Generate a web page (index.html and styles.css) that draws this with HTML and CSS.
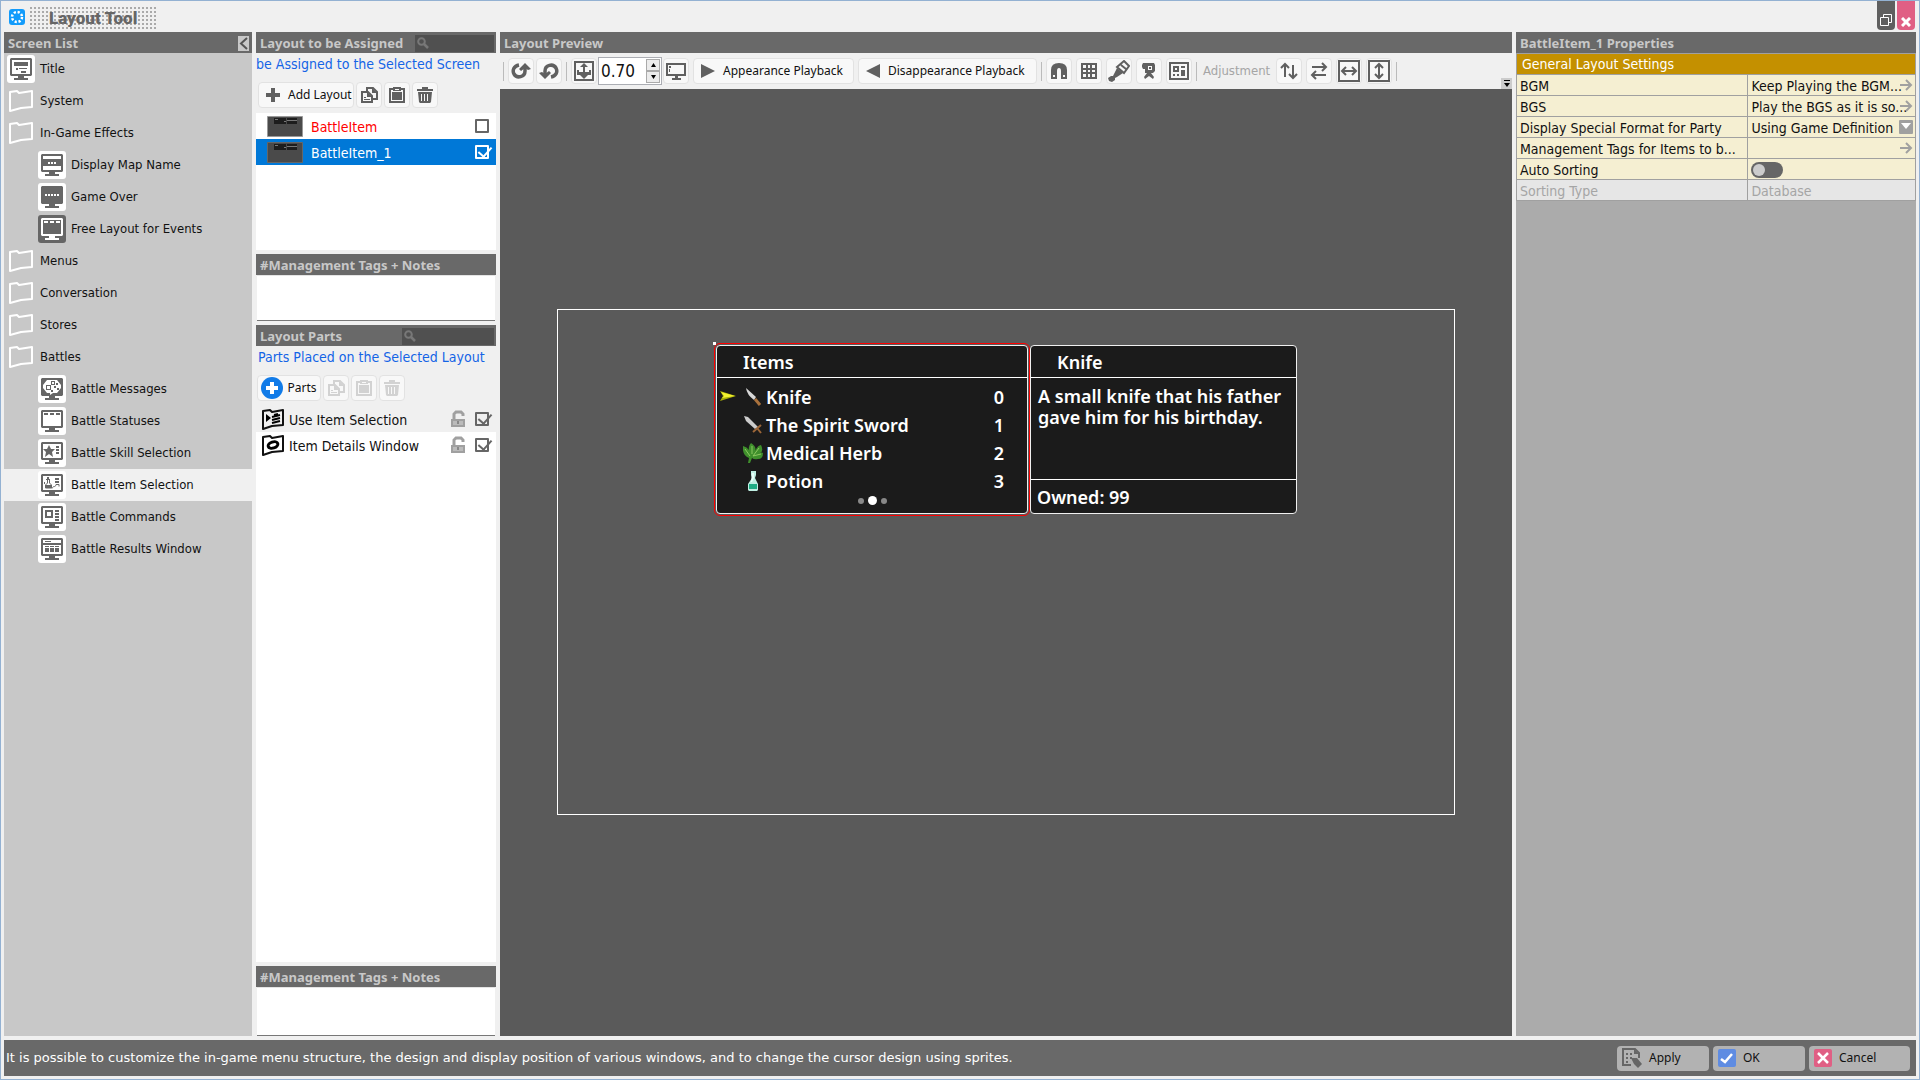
FILE: index.html
```html
<!DOCTYPE html>
<html lang="en">
<head>
<meta charset="utf-8">
<title>Layout Tool</title>
<link rel="stylesheet" href="styles.css">
</head>
<body>
<svg class="sprite" aria-hidden="true">
  <symbol id="monitor" viewBox="0 0 28 28"><path fill="currentColor" fill-rule="evenodd" d="M4 3h20l1 1v16l-1 1H4l-1-1V4zM5 5v14h18V5z"/><path fill="currentColor" d="M11 21h6v2h4v2H7v-2h4z"/></symbol>
  <symbol id="monitor-full" viewBox="0 0 28 28"><path fill="currentColor" d="M4 3h20l1 1v16l-1 1H4l-1-1V4zM11 21h6v2h4v2H7v-2h4z"/></symbol>
  <symbol id="folder" viewBox="0 0 28 28"><path fill="none" stroke="currentColor" stroke-width="2" stroke-linejoin="round" d="M3 5l7-1 2 2 13-2v16l-11 1-11 3z"/></symbol>
  <symbol id="part-folder" viewBox="0 0 24 22"><path fill="none" stroke="currentColor" stroke-width="2" stroke-linejoin="round" d="M2 3l7-1 2 2 11-2v15l-11 1-9 3z"/></symbol>
  <symbol id="copy" viewBox="0 0 18 18"><path fill="none" stroke="currentColor" stroke-width="2" d="M7 5V2h6l4 4v7h-4"/><path fill="currentColor" d="M12 2v5h5z"/><path fill="none" stroke="currentColor" stroke-width="2" d="M2 6h6l4 4v6H2z"/><path fill="currentColor" d="M7 6v5h5zM4 11h2v1H4zM4 13h6v1H4z"/></symbol>
  <symbol id="paste" viewBox="0 0 18 18"><path fill="none" stroke="currentColor" stroke-width="2" d="M6 3H2v13h14V3h-4"/><path fill="currentColor" d="M5 1h8v4H5zM4 6h10v8H4z"/><path fill="#f8f8f8" d="M7 3h4v1H7z"/></symbol>
  <symbol id="trash" viewBox="0 0 18 18"><path fill="currentColor" fill-rule="evenodd" d="M6 1h6v2h5v2H1V3h5zM2 6h14l-1 10-1 1H4l-1-1zM5 8v7h1V8zM8 8v7h1V8zM11 8v7h1V8z"/></symbol>
  <symbol id="lens" viewBox="0 0 12 12"><circle cx="4.500" cy="4.500" r="3.300" fill="none" stroke="currentColor" stroke-width="2"/><path stroke="currentColor" stroke-width="2.500" d="M7 7l4 4"/></symbol>
  <symbol id="lock" viewBox="0 0 14 18"><path fill="none" stroke="#a0a0a0" stroke-width="3" d="M3 9V4l2-2h5l2 2v2"/><path fill="#a0a0a0" d="M0 9h14v8H0z"/><path fill="#bbb" d="M2 11h10v4H2z"/><path fill="#888" d="M6 11h2v3H6z"/></symbol>
  <symbol id="arrow" viewBox="0 0 14 14"><path fill="none" stroke="currentColor" stroke-width="2" d="M1 7h11M7 2l5 5-5 5"/></symbol>
  <symbol id="rotate" viewBox="0 0 20 18"><path fill="none" stroke="currentColor" stroke-width="3.500" d="M8 3C3 4 1 8 3 12c3 5 11 3 11-3V5"/><path fill="currentColor" d="M8 7l6-6 6 6-3 1-3-2-4 3z"/></symbol>
</svg>

<div class="window">
  <header class="titlebar">
    <svg class="app-icon" viewBox="0 0 16 16"><rect width="16" height="16" rx="3" fill="#129bfb"/><circle cx="8" cy="8" r="5" fill="none" stroke="#fff" stroke-width="2.500" stroke-dasharray="2.200 1.727"/></svg>
    <h1 class="app-title">Layout Tool</h1>
    <div class="window-buttons">
      <button class="win-btn" aria-label="Restore"><svg width="14" height="14" viewBox="0 0 14 14"><path fill="none" stroke="#fff" d="M4.500 4V1.500h8v8H10M1.500 4.500h8v8h-8z"/></svg></button>
      <button class="win-btn close" aria-label="Close"><svg width="10" height="10" viewBox="0 0 10 10"><path stroke="#fff" stroke-width="3" d="M1 1l8 8M9 1L1 9"/></svg></button>
    </div>
  </header>

  <main class="panels">
    <section class="panel screens">
      <h2 class="bar">Screen List <button class="collapse" aria-label="Collapse"><svg width="11" height="15" viewBox="0 0 11 15"><path fill="none" stroke="#555" stroke-width="2" d="M9 2L3 7.500 9 13"/></svg></button></h2>
      <nav class="tree">
        <button class="node"><svg class="tile"><use href="#monitor"/><path fill="currentColor" d="M7 7h14v4H7zM9 13h2v2H9zM12 13h8v1h-8zM14 16h5v2h-5z"/></svg>Title</button>
        <button class="node"><svg class="folder"><use href="#folder"/></svg>System</button>
        <button class="node"><svg class="folder"><use href="#folder"/></svg>In-Game Effects</button>
        <button class="node child"><svg class="tile"><use href="#monitor"/><path fill="currentColor" d="M5 8h18v7H5z"/><path fill="#fff" d="M10 11h2v2h-2zM13 11h2v2h-2zM16 11h2v2h-2z"/></svg>Display Map Name</button>
        <button class="node child"><svg class="tile"><use href="#monitor-full"/><path fill="#fff" d="M7 11h2v2H7zM10 11h2v2h-2zM13 11h2v2h-2zM16 11h2v2h-2zM19 11h2v2h-2z"/></svg>Game Over</button>
        <button class="node child"><svg class="tile inverse"><use href="#monitor"/><path fill="#fff" d="M6 6h4v2H6zM12 6h4v2h-4zM18 6h4v2h-4z"/></svg>Free Layout for Events</button>
        <button class="node"><svg class="folder"><use href="#folder"/></svg>Menus</button>
        <button class="node"><svg class="folder"><use href="#folder"/></svg>Conversation</button>
        <button class="node"><svg class="folder"><use href="#folder"/></svg>Stores</button>
        <button class="node"><svg class="folder"><use href="#folder"/></svg>Battles</button>
        <button class="node child"><svg class="tile"><use href="#monitor-full"/><path fill="#fff" d="M9 5h10l4 5v3l-4 5h-4l-3 2v-2H9l-4-5v-3z"/><path fill="currentColor" fill-rule="evenodd" d="M8 10h5v5H8zM9 11v3h3v-3zM13 6h4v4h-4zM14 7v2h2V7zM16 11h2v2h-2zM18 8h2v2h-2zM13 15h2v2h-2zM19 13h2v2h-2z"/></svg>Battle Messages</button>
        <button class="node child"><svg class="tile"><use href="#monitor"/><path fill="currentColor" d="M6 6h4v2H6zM12 6h4v2h-4zM18 6h4v2h-4z"/></svg>Battle Statuses</button>
        <button class="node child"><svg class="tile"><use href="#monitor"/><path fill="currentColor" d="M11 6l2 4h4l-3 3 1 5-4-3-4 3 1-5-3-3h4zM18 7h3v2h-3zM18 10h3v2h-3zM18 13h3v2h-3z"/></svg>Battle Skill Selection</button>
        <button class="node child selected"><svg class="tile"><use href="#monitor"/><path fill="currentColor" d="M9 6h2v2H9zM8 8h4v1H8zM17 7h4v2h-4zM17 10h4v2h-4zM7 14h6v3H7z"/><path fill="none" stroke="currentColor" d="M9.500 9v3l-2 2v3h6v-3l-2-2V9M6.500 11v2M14 17.500c2-4 3 0 4-4h3v2"/></svg>Battle Item Selection</button>
        <button class="node child"><svg class="tile"><use href="#monitor"/><path fill="none" stroke="currentColor" stroke-width="2" d="M8 8h6v6H8z"/><path fill="currentColor" d="M17 7h4v2h-4zM17 10h4v2h-4zM17 13h4v2h-4zM17 16h4v2h-4z"/></svg>Battle Commands</button>
        <button class="node child"><svg class="tile"><use href="#monitor"/><path fill="currentColor" d="M7 6h6v1H7zM5 8h18v2H5zM7 11h4v1H7zM12 11h4v1h-4zM17 11h4v1h-4zM7 13h4v4H7zM12 13h4v4h-4zM17 13h4v4h-4z"/></svg>Battle Results Window</button>
      </nav>
    </section>

    <div class="middle">
      <section class="block">
        <h2 class="bar">Layout to be Assigned <label class="search short"><svg width="12" height="12"><use href="#lens"/></svg><input type="text" aria-label="Search layouts"></label></h2>
        <p class="caption rolling">be Assigned to the Selected Screen</p>
        <div class="tools">
          <button class="btn add"><svg width="14" height="14" viewBox="0 0 14 14"><path fill="currentColor" d="M5 0h4v5h5v4H9v5H5V9H0V5h5z"/></svg><span>Add Layout</span></button>
          <button class="btn" aria-label="Copy"><svg width="18" height="18"><use href="#copy"/></svg></button>
          <button class="btn" aria-label="Paste"><svg width="18" height="18"><use href="#paste"/></svg></button>
          <button class="btn" aria-label="Delete"><svg width="18" height="18"><use href="#trash"/></svg></button>
        </div>
        <ul class="list layouts">
          <li class="row unused"><svg class="thumb" viewBox="0 0 36 21"><path fill="#4a4a4a" stroke="#999" d="M.5.5h35v20H.5z"/><path fill="#1d1d1d" d="M7 2h12v6H7zM20 2h10v6H20z"/><path stroke="#777" d="M20 4.500h10M8 3.500h3M17 5.500h2"/></svg><label for="l1">BattleItem</label><input id="l1" class="check" type="checkbox"></li>
          <li class="row active"><svg class="thumb" viewBox="0 0 36 21"><path fill="#4a4a4a" stroke="#666" d="M.5.5h35v20H.5z"/><path fill="#1d1d1d" d="M7 2h12v6H7zM20 2h10v6H20z"/><path stroke="#777" d="M20 4.500h10M8 3.500h3M17 5.500h2"/></svg><label for="l2">BattleItem_1</label><input id="l2" class="check" type="checkbox" checked></li>
        </ul>
      </section>
      <section class="block">
        <h2 class="bar">#Management Tags + Notes</h2>
        <textarea class="notes" aria-label="Layout tags and notes"></textarea>
      </section>
      <section class="block grow">
        <h2 class="bar">Layout Parts <label class="search"><svg width="12" height="12"><use href="#lens"/></svg><input type="text" aria-label="Search parts"></label></h2>
        <p class="caption">Parts Placed on the Selected Layout</p>
        <div class="tools parts">
          <button class="btn part"><svg width="22" height="22" viewBox="0 0 22 22"><circle cx="11" cy="11" r="11" fill="#117be8"/><path fill="#fff" d="M9 5h4v4h4v4h-4v4H9v-4H5V9h4z"/></svg><span>Parts</span></button>
          <button class="btn" disabled aria-label="Copy part"><svg width="18" height="18"><use href="#copy"/></svg></button>
          <button class="btn" disabled aria-label="Paste part"><svg width="18" height="18"><use href="#paste"/></svg></button>
          <button class="btn" disabled aria-label="Delete part"><svg width="18" height="18"><use href="#trash"/></svg></button>
        </div>
        <ul class="list">
          <li class="row part-row current"><svg width="24" height="22" viewBox="0 0 24 22"><use href="#part-folder"/><path d="M5 6l5 4-5 4z"/><path stroke="#000" stroke-width="2" d="M11 9l8-2M11 12l8-2M11 15l8-2M13 7l4-1"/></svg><label for="p1">Use Item Selection</label><svg width="14" height="18"><use href="#lock"/></svg><input id="p1" class="check" type="checkbox" checked></li>
          <li class="row part-row"><svg width="24" height="22" viewBox="0 0 24 22"><use href="#part-folder"/><ellipse cx="12" cy="11" rx="5" ry="3" fill="none" stroke="#000" stroke-width="3" transform="rotate(-18 12 11)"/></svg><label for="p2">Item Details Window</label><svg width="14" height="18"><use href="#lock"/></svg><input id="p2" class="check" type="checkbox" checked></li>
        </ul>
      </section>
      <section class="block">
        <h2 class="bar">#Management Tags + Notes</h2>
        <textarea class="notes" aria-label="Part tags and notes"></textarea>
      </section>
    </div>

    <section class="panel preview">
      <h2 class="bar">Layout Preview</h2>
      <div class="toolbar">
        <i class="sep"></i>
        <div class="group">
          <button class="btn" aria-label="Undo"><svg width="20" height="18"><use href="#rotate"/></svg></button>
          <button class="btn" aria-label="Redo"><svg class="turned" width="20" height="18"><use href="#rotate"/></svg></button>
        </div>
        <i class="sep"></i>
        <div class="group tight">
          <button class="btn" aria-label="Fit"><svg width="20" height="20" viewBox="0 0 20 20"><path fill="none" stroke="currentColor" stroke-width="2" d="M1 1h18v18H1z"/><path fill="currentColor" d="M10 2l4 4H6zM9 6h2v5H9zM3 9h2v2h10V9h2v5h-3l-4 4-4-4H3z"/></svg></button>
          <div class="spin"><input type="text" value="0.70" aria-label="Zoom"><button aria-label="Increase"><svg width="5" height="4" viewBox="0 0 5 4"><path d="M2.500 0L5 4H0z"/></svg></button><button aria-label="Decrease"><svg width="5" height="4" viewBox="0 0 5 4"><path d="M2.500 4L5 0H0z"/></svg></button></div>
          <button class="btn" aria-label="Actual size"><svg width="20" height="18" viewBox="0 0 20 18"><path fill="none" stroke="currentColor" stroke-width="2" d="M1 2h18v11H1z"/><path fill="currentColor" d="M9 13h3v3h3v2H6v-2h3zM3 4h2v2H3zM3 7h1v3H3z"/></svg></button>
        </div>
        <button class="btn play"><svg width="14" height="14" viewBox="0 0 14 14"><path fill="currentColor" d="M0 0l14 7-14 7z"/></svg><span>Appearance Playback</span></button>
        <button class="btn play back"><svg width="14" height="14" viewBox="0 0 14 14"><path fill="currentColor" d="M14 0L0 7l14 7z"/></svg><span>Disappearance Playback</span></button>
        <i class="sep"></i>
        <button class="btn" aria-label="Snap"><svg width="18" height="18" viewBox="0 0 18 18"><path fill="currentColor" fill-rule="evenodd" d="M1 17V8q0-7 8-7t8 7v9h-6V9q0-3-2-3T7 9v8zM3 13v2h2v-2zM13 13v2h2v-2z"/></svg></button>
        <button class="btn" aria-label="Grid"><svg width="16" height="16" viewBox="0 0 16 16"><path fill="none" stroke="currentColor" stroke-width="2" d="M1 1h14v14H1zM1 6h14M1 10h14M6 1v14M10 1v14"/></svg></button>
        <button class="btn" aria-label="Brush"><svg width="22" height="22" viewBox="0 0 22 22"><path fill="none" stroke="currentColor" stroke-width="2" d="M16 1l5 5-5 7-7-6zM13 5l5 4"/><path fill="currentColor" d="M9 8l6 5-6 4-2 1v2l-3 2-3-1-1-3 3-2h2l1-2z"/></svg></button>
        <button class="btn" aria-label="Camera"><svg width="18" height="18" viewBox="0 0 18 18"><path fill="currentColor" fill-rule="evenodd" d="M3 1h11l1 2v6l-2 2h-2l3 4-1 2-4-3-4 3-1-2 3-4H5V7H3L2 5V3zM8 4v4h4V4z"/><path fill="currentColor" d="M9 5h2v2H9z"/></svg></button>
        <button class="btn" aria-label="Safe area"><svg width="20" height="18" viewBox="0 0 20 18"><path fill="none" stroke="currentColor" stroke-width="2" d="M1 1h18v16H1zM5 5h4v4H5z"/><path fill="currentColor" d="M12 4h4v2h-4zM12 8h4v6h-4zM4 12h2v2H4zM8 12h2v2H8z"/></svg></button>
        <i class="sep"></i>
        <span class="adjust">Adjustment</span>
        <button class="btn" aria-label="Swap vertically"><svg width="18" height="18" viewBox="0 0 18 18"><path fill="none" stroke="currentColor" stroke-width="2" d="M5 15V3M1 6l4-4 4 4M13 3v12M9 12l4 4 4-4"/></svg></button>
        <button class="btn" aria-label="Swap horizontally"><svg width="18" height="18" viewBox="0 0 18 18"><path fill="none" stroke="currentColor" stroke-width="2" d="M2 5h13M12 1l4 4-4 4M16 13H3M6 9l-4 4 4 4"/></svg></button>
        <button class="btn" aria-label="Fit width"><svg width="22" height="22" viewBox="0 0 22 22"><path fill="none" stroke="currentColor" stroke-width="2" d="M1 1h20v20H1zM4 11h14M8 7l-4 4 4 4M14 7l4 4-4 4"/></svg></button>
        <button class="btn" aria-label="Fit height"><svg width="22" height="22" viewBox="0 0 22 22"><path fill="none" stroke="currentColor" stroke-width="2" d="M1 1h20v20H1zM11 4v14M7 8l4-4 4 4M7 14l4 4 4-4"/></svg></button>
        <i class="sep"></i>
        <button class="overflow" aria-label="More"><svg width="6" height="7" viewBox="0 0 6 7"><path d="M0 0h6v1H0zM0 3h6L3 7z"/></svg></button>
      </div>
      <div class="stage">
        <div class="screen">
          <div class="game-window items">
            <h3>Items</h3>
            <svg class="pointer" viewBox="0 0 16 10"><path fill="#a8ae08" d="M0 0l16 5-16 5 3-5z"/><path fill="#f2f230" d="M1 1l14 4-13 2 2-2z"/></svg>
            <ul>
              <li><svg viewBox="0 0 20 20"><path fill="#d8d8d8" d="M3 1l10 9-2 3Q4 8 3 1z"/><path stroke="#a9713c" stroke-width="3" d="M12 12l5 6"/></svg><span>Knife</span><b>0</b></li>
              <li><svg viewBox="0 0 20 20"><path fill="#ccc" d="M1 1l4 1 10 10-3 2L3 6z"/><path stroke="#9c6638" stroke-width="2" d="M18 10l-8 7M14 13l4 5"/></svg><span>The Spirit Sword</span><b>1</b></li>
              <li><svg viewBox="0 0 20 20"><path fill="#3f8f2c" d="M8 0q6 4 4 8 3-6 6-6 3 6-1 8 2-1 3 0 0 6-5 6-4 1-6-1l-2 5H5l1-5Q-1 12 0 3q4 1 6 4Q5 3 8 0z"/><path fill="none" stroke="#8cc860" d="M9 3v8M2 6l5 7M16 5l-6 8 8-2"/></svg><span>Medical Herb</span><b>2</b></li>
              <li><svg viewBox="0 0 20 20"><path fill="#bfeee2" d="M8 0h5v4l-1 3 3 6v6l-1 1H6l-1-1v-6l4-6-1-3z"/><path fill="#1eac84" d="M6 13h8v5H6z"/><path fill="#e8fffa" d="M9 2h2v5l-2 4H8z"/></svg><span>Potion</span><b>3</b></li>
            </ul>
            <div class="dots"><i></i><i class="on"></i><i></i></div>
          </div>
          <div class="game-window details">
            <h3>Knife</h3>
            <p>A small knife that his father<br>gave him for his birthday.</p>
            <footer>Owned: 99</footer>
          </div>
        </div>
      </div>
    </section>

    <section class="panel props">
      <h2 class="bar">BattleItem_1 Properties</h2>
      <table class="grid">
        <colgroup><col class="name-col"><col></colgroup>
        <thead><tr><th colspan="2">General Layout Settings</th></tr></thead>
        <tbody>
          <tr><td>BGM</td><td><button class="value">Keep Playing the BGM...<svg width="14" height="14"><use href="#arrow"/></svg></button></td></tr>
          <tr><td>BGS</td><td><button class="value">Play the BGS as it is so...<svg width="14" height="14"><use href="#arrow"/></svg></button></td></tr>
          <tr><td><label for="fmt">Display Special Format for Party</label></td><td><div class="value"><select id="fmt"><option>Using Game Definition</option></select><svg width="14" height="14" viewBox="0 0 14 14"><rect width="14" height="14" rx="1" fill="#a0a0a0"/><path fill="#fff" d="M2 3h10L7 9z"/></svg></div></td></tr>
          <tr><td>Management Tags for Items to b...</td><td><button class="value" aria-label="Edit tags"><svg width="14" height="14"><use href="#arrow"/></svg></button></td></tr>
          <tr><td><label for="sort">Auto Sorting</label></td><td><input id="sort" class="switch" type="checkbox"></td></tr>
          <tr class="off"><td>Sorting Type</td><td>Database</td></tr>
        </tbody>
      </table>
    </section>
  </main>

  <footer class="status">
    <p>It is possible to customize the in-game menu structure, the design and display position of various windows, and to change the cursor design using sprites.</p>
    <button class="action"><svg width="20" height="20" viewBox="0 0 20 20"><path fill="none" stroke="#666" stroke-width="2" d="M9 17H1V1h12l4 4v5"/><path fill="#666" d="M12 1v5h5zM4 5h2v2H4zM8 5h2v2H8zM4 9h2v2H4zM8 9h2v2H8zM4 13h2v2H4zM9 10l6 0 5 6-4 4-4-4z"/></svg>Apply</button>
    <button class="action"><svg width="18" height="18" viewBox="0 0 18 18"><rect width="18" height="18" rx="2" fill="#5f8ce2"/><path fill="none" stroke="#fff" stroke-width="2.500" d="M3 10l4 3 7-8"/></svg>OK</button>
    <button class="action wide"><svg width="18" height="18" viewBox="0 0 18 18"><rect width="18" height="18" rx="2" fill="#e05f84"/><path stroke="#fff" stroke-width="2.500" d="M4 4l10 10M14 4L4 14"/></svg>Cancel</button>
  </footer>
</div>
</body>
</html>
```
FILE: styles.css
```css
* { box-sizing: border-box; }
body { margin: 0; background: #f0f0f0; color: #111; font: 14px/20px "DejaVu Sans Condensed", "DejaVu Sans", sans-serif; }
button, input, select, textarea { margin: 0; padding: 0; border: 0; font: inherit; color: inherit; background: none; }
h1, h2, h3, p, ul { margin: 0; padding: 0; }
ul { list-style: none; }
svg { flex: none; display: block; }
.sprite { position: absolute; width: 0; height: 0; }

.window { display: flex; flex-direction: column; min-height: 100vh; padding: 0 3px 3px; border: 1px solid #93b1d2; }

/* title bar */
.titlebar { display: flex; align-items: flex-start; height: 31px; padding-left: 5px; }
.app-icon { width: 16px; height: 16px; margin-top: 8px; }
.app-title { width: 126px; height: 22px; margin: 6px 0 0 5px; padding-left: 19px; color: #666; font: 900 17px/22px Roboto, sans-serif; white-space: nowrap; background: conic-gradient(from 270deg, #aaa 25%, transparent 0) 0 0 / 4px 4px; }
.window-buttons { display: flex; gap: 2px; margin-left: auto; padding-right: 1px; }
.win-btn { display: flex; align-items: flex-end; justify-content: center; width: 18px; height: 29px; padding-bottom: 3px; border-radius: 0 0 4px 4px; background: #5f5f5f; }
.win-btn.close { background: #e05f84; }

/* panels */
.panels { flex: 1; display: grid; grid-template-columns: 248px 240px minmax(0, 1fr) 400px; gap: 4px; }
.panel { display: flex; flex-direction: column; min-width: 0; }
.bar { display: flex; align-items: center; justify-content: space-between; flex: none; height: 21px; padding: 1px 2px 0 4px; background: #696969; color: #c8c8c8; font: 700 13px/20px "Noto Sans", sans-serif; white-space: nowrap; }
.collapse { display: flex; width: 11px; height: 15px; margin-right: 1px; background: #c8c8c8; }
.search { display: flex; align-items: center; width: 92px; height: 17px; padding-left: 2px; background: #505050; color: #787878; }
.search.short { width: 79px; }
.search input { width: 100%; min-width: 0; height: 17px; }

/* screen list */
.screens { background: #c8c8c8; }
.node { display: flex; align-items: center; gap: 5px; width: 100%; height: 32px; padding-left: 3px; font-size: 13px; text-align: left; }
.node.child { padding-left: 34px; }
.node.selected { background: #f0f0f0; }
.tile { width: 28px; height: 28px; border-radius: 3px; background: #fff; color: #666; }
.tile.inverse { background: #666; color: #fff; }
.folder { width: 28px; height: 28px; color: #fff; }

/* layouts and parts */
.middle { display: flex; flex-direction: column; gap: 4px; }
.block { display: flex; flex-direction: column; }
.grow { flex: 1; }
.caption { height: 24px; padding-left: 2px; color: #1464e6; line-height: 23px; white-space: nowrap; }
.rolling { display: flex; justify-content: flex-end; padding: 0 16px 0 0; overflow: hidden; }
.tools { display: flex; gap: 2px; height: 36px; padding: 5px 2px; }
.btn { display: flex; align-items: center; justify-content: center; flex: none; width: 26px; height: 26px; border: 1px solid #e2e2e2; border-radius: 4px; background: #f8f8f8; color: #606060; font: 12px/16px "Noto Sans", sans-serif; white-space: nowrap; }
.btn span { color: #111; }
.btn:disabled { color: #d2d2d2; }
.btn.add { width: 96px; gap: 8px; padding-left: 7px; justify-content: flex-start; }
.btn.part { width: 64px; gap: 4px; }
.parts { padding: 5px 1px; }
.list { flex: 1; background: #fff; }
.layouts { flex: none; height: 137px; }
.row { display: flex; align-items: center; height: 26px; padding: 0 7px 0 11px; gap: 8px; }
.row label { flex: 1; padding-top: 2px; white-space: nowrap; }
.part-row { padding-left: 5px; gap: 4px; }
.part-row .check { margin-left: 6px; }
.current { background: #f0f0f0; }
.unused label { color: #f00; }
.active { background: #0078d7; color: #fff; }
.thumb { width: 36px; height: 21px; }
.check { position: relative; flex: none; width: 14px; height: 14px; appearance: none; border: 2px solid #666; border-radius: 1px; }
.active .check { border-color: #fff; }
.check:checked::after { content: ""; position: absolute; left: 4px; top: -3px; width: 6px; height: 11px; border: solid #666; border-width: 0 2px 2px 0; transform: rotate(42deg); }
.active .check:checked::after { border-color: #fff; }
.notes { height: 46px; margin: 0 1px; border: solid #e4e4e4; border-width: 1px 0 1px; border-bottom-color: #777; background: #fff; resize: none; display: block; }
.middle > :last-child .notes { height: 49px; }

/* preview toolbar */
.toolbar { display: flex; align-items: center; flex: none; height: 36px; gap: 4px; padding-left: 3px; }
.group { display: flex; align-items: center; gap: 2px; }
.group.tight { gap: 1px; }
.sep { flex: none; width: 1px; height: 19px; background: #bbb; }
.turned { transform: rotate(180deg); }
.spin { display: grid; grid-template: 1fr 1fr / 1fr 14px; width: 64px; height: 28px; padding: 1px; border: 1px solid #abadb3; background: #fff; }
.spin input { grid-row: span 2; min-width: 0; padding-left: 1px; font-size: 17px; line-height: 24px; }
.spin button { display: flex; align-items: center; justify-content: center; border: 1px solid #aaa; background: #ececec; }
.play { width: 161px; gap: 8px; padding-left: 7px; justify-content: flex-start; }
.play.back { width: 179px; }
.adjust { padding: 0 2px; color: #a5a5a5; font-size: 13px; }
.overflow { align-self: flex-end; display: flex; justify-content: center; align-items: center; width: 11px; height: 11px; margin-left: auto; background: #ccc; }

/* game canvas */
.stage { flex: 1; display: flex; align-items: center; justify-content: center; padding-bottom: 2px; background: #5a5a5a; }
.screen { display: flex; align-items: flex-start; gap: 2px; width: 898px; height: 506px; padding: 35px 0 0 158px; border: 1px solid #fff; color: #fff; font: 600 18px/28px "Noto Sans", sans-serif; }
.game-window { position: relative; height: 169px; border: 1px solid #f0f0f0; border-radius: 4px; background: #1b1b1b; }
.game-window h3 { height: 32px; padding-left: 26px; border-bottom: 1px solid #fff; font: inherit; line-height: 32px; }
.items { width: 312px; outline: 1px solid #f00; outline-offset: 1px; }
.items::before { content: ""; position: absolute; left: -4px; top: -4px; width: 3px; height: 3px; background: #fff; }
.items ul { padding: 5px 23px 0 26px; }
.items li { display: flex; align-items: center; gap: 3px; height: 28px; }
.items li svg { width: 20px; height: 20px; }
.items li span { flex: 1; }
.items b { font-weight: 600; }
.pointer { position: absolute; left: 3px; top: 45px; width: 16px; height: 10px; }
.dots { display: flex; align-items: center; justify-content: center; gap: 4px; height: 12px; }
.dots i { width: 6px; height: 6px; border-radius: 50%; background: #888; }
.dots .on { width: 9px; height: 9px; background: #fff; }
.details { display: flex; flex-direction: column; width: 267px; }
.details p { flex: 1; padding: 8px 0 0 7px; line-height: 21px; white-space: nowrap; }
.details footer { height: 34px; padding: 3px 0 0 6px; border-top: 1px solid #fff; }

/* properties */
.props { background: #ababab; }
.grid { width: 100%; table-layout: fixed; border-collapse: collapse; }
.name-col { width: 58%; }
.grid th, .grid td { height: 21px; padding: 2px 0 0 3px; border: 1px solid #a0a0a0; overflow: hidden; white-space: nowrap; line-height: 18px; text-align: left; }
.grid th { padding: 0 0 0 5px; line-height: 20px; background: #c49000; color: #fff; font-weight: 400; }
.grid td { background: #f5efd2; }
.grid .off td { background: #e6e6e6; color: #a5a5a5; }
.value { position: relative; display: flex; align-items: center; width: 100%; height: 18px; white-space: nowrap; }
.value svg { position: absolute; right: 2px; top: 1px; color: #a0a0a0; }
.value select { width: 100%; height: 18px; appearance: none; }
.switch { position: relative; display: block; width: 32px; height: 16px; appearance: none; border-radius: 8px; background: #666; }
.switch::after { content: ""; position: absolute; left: 2px; top: 2px; width: 12px; height: 12px; border-radius: 50%; background: #ccc; }

/* status bar */
.status { display: flex; align-items: center; gap: 4px; height: 36px; margin-top: 4px; padding: 0 6px 0 2px; background: #696969; color: #fff; }
.status p { flex: 1; font: 13px/20px "DejaVu Sans", sans-serif; }
.action { display: flex; align-items: center; gap: 7px; width: 92px; height: 25px; padding-left: 5px; border-radius: 4px; background: #b2b2b2; color: #111; font: 12px/16px "Noto Sans", sans-serif; }
.action.wide { width: 101px; }
```
